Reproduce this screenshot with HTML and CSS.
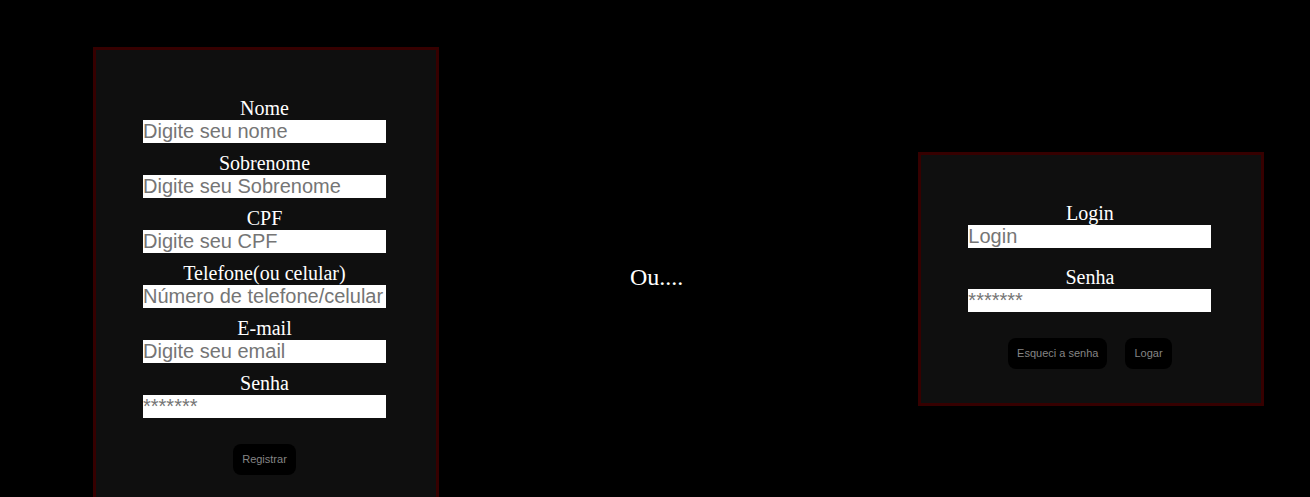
FILE: index.html
```html
<!DOCTYPE html>
<html lang="pt-BR">
<head>
<meta charset="utf-8">
<title>Cadastro / Login</title>
<link rel="stylesheet" href="styles.css">
</head>
<body>
<main class="page">
  <form class="card card-register">
    <div class="field">
      <label class="label" for="nome">Nome</label>
      <input class="input" id="nome" type="text" placeholder="Digite seu nome">
    </div>
    <div class="field">
      <label class="label" for="sobrenome">Sobrenome</label>
      <input class="input" id="sobrenome" type="text" placeholder="Digite seu Sobrenome">
    </div>
    <div class="field">
      <label class="label" for="cpf">CPF</label>
      <input class="input" id="cpf" type="text" placeholder="Digite seu CPF">
    </div>
    <div class="field">
      <label class="label" for="tel">Telefone(ou celular)</label>
      <input class="input" id="tel" type="text" placeholder="Número de telefone/celular">
    </div>
    <div class="field">
      <label class="label" for="email">E-mail</label>
      <input class="input" id="email" type="text" placeholder="Digite seu email">
    </div>
    <div class="field">
      <label class="label" for="senha">Senha</label>
      <input class="input" id="senha" type="password" placeholder="*******">
    </div>
    <div class="actions">
      <button class="btn" type="button">Registrar</button>
    </div>
  </form>

  <p class="or">Ou....</p>

  <form class="card card-login">
    <div class="field">
      <label class="label" for="login">Login</label>
      <input class="input" id="login" type="text" placeholder="Login">
    </div>
    <div class="field">
      <label class="label" for="lsenha">Senha</label>
      <input class="input" id="lsenha" type="password" placeholder="*******">
    </div>
    <div class="actions">
      <button class="btn" type="button">Esqueci a senha</button>
      <button class="btn" type="button">Logar</button>
    </div>
  </form>
</main>
</body>
</html>
```

FILE: styles.css
```css
html, body {
  margin: 0;
  padding: 0;
  background: #000;
  overflow: hidden;
}

.page {
  display: flex;
  align-items: center;
  padding: 47px 0 0 93px;
  font-family: "Liberation Serif", "Times New Roman", serif;
}

.card {
  box-sizing: border-box;
  width: 346px;
  flex: none;
  margin: 0;
  background: #0f0f0f;
  border: 3px solid #360000;
  padding: 47px 50px 34px 47px;
  display: flex;
  flex-direction: column;
}

.card-register {
  gap: 9px;
}

.card-login {
  gap: 18px;
  margin-left: 235px;
  margin-bottom: 2px;
}

.field {
  display: flex;
  flex-direction: column;
}

.label {
  display: block;
  text-align: center;
  color: #fff;
  font-size: 20px;
  line-height: 23px;
}

.input {
  display: block;
  box-sizing: border-box;
  width: 243px;
  height: 23px;
  margin: 0;
  padding: 0;
  border: 0;
  outline: none;
  background: #fff;
  font-family: "Liberation Sans", Arial, sans-serif;
  font-size: 20px;
  line-height: 23px;
  color: #000;
}

.input::placeholder {
  color: #757575;
}

.actions {
  display: flex;
  justify-content: center;
  gap: 18px;
  margin-top: 17px;
}

.card-login .actions {
  margin-top: 8px;
}

.btn {
  background: #000;
  color: #858585;
  border: 0;
  border-radius: 8px;
  padding: 9px;
  height: 31px;
  font-family: "Liberation Sans", Arial, sans-serif;
  font-size: 11px;
  line-height: 13px;
}

.or {
  margin: 0 0 4px 191px;
  color: #fff;
  font-size: 24px;
  flex: none;
}
```
